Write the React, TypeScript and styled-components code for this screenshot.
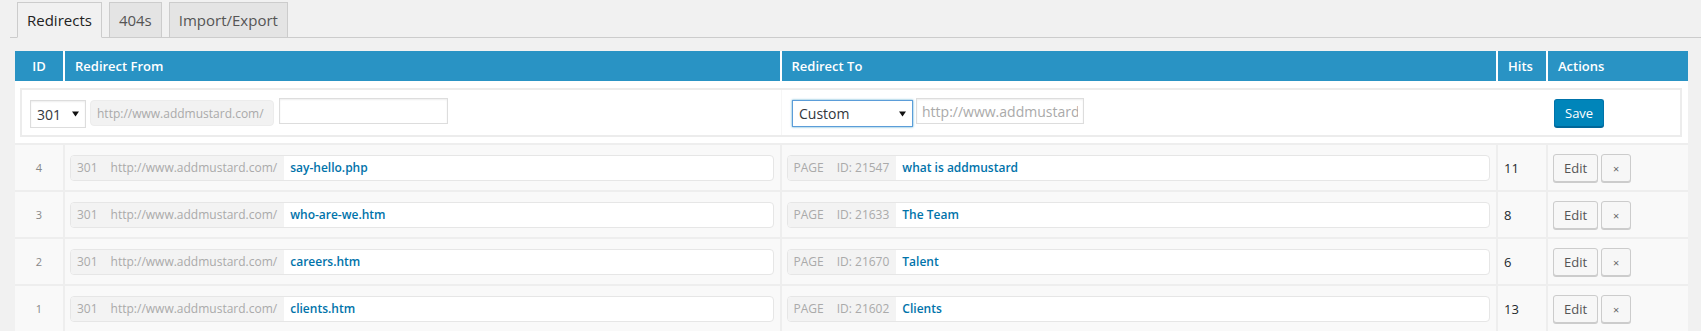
import React from "react";
import styled, { createGlobalStyle } from "styled-components";

const GlobalStyle = createGlobalStyle`
  html, body { margin: 0; padding: 0; background: #f1f1f1; }
  body { font-family: "Open Sans", "Noto Sans", sans-serif; font-size: 13px; color: #444; }
  * { box-sizing: border-box; }
  input { font-family: inherit; }
`;

const COLS = "48px minmax(0, 1fr) minmax(0, 1fr) 48px 140px";

const Page = styled.div`
  display: flex;
  flex-direction: column;
`;

const TabBar = styled.nav`
  display: flex;
  align-items: flex-end;
  gap: 7px;
  margin-left: 10px;
  padding: 2px 0 0 7px;
  border-bottom: 1px solid #ccc;
`;

const Tab = styled.a<{ $active?: boolean }>`
  display: block;
  font-size: 15px;
  font-weight: 400;
  line-height: 24px;
  padding: 5px 9px;
  border: 1px solid #ccc;
  border-bottom: ${(p) => (p.$active ? "1px solid #f1f1f1" : "none")};
  margin-bottom: ${(p) => (p.$active ? "-1px" : "0")};
  background: ${(p) => (p.$active ? "#f1f1f1" : "#e4e4e4")};
  color: ${(p) => (p.$active ? "#222" : "#555")};
  text-decoration: none;
  cursor: pointer;
`;

const Table = styled.div`
  margin: 13px 13px 0 15px;
  display: flex;
  flex-direction: column;
  background: #eeeeee;
`;

const HeaderRow = styled.div`
  display: grid;
  grid-template-columns: ${COLS};
  column-gap: 2px;
  background: #fff;
`;

const HeadCell = styled.div<{ $center?: boolean }>`
  background: #2993c4;
  color: #fff;
  font-weight: 600;
  font-size: 13px;
  line-height: 30px;
  padding: 0 10px;
  text-align: ${(p) => (p.$center ? "center" : "left")};
  white-space: nowrap;
`;

const AddRow = styled.div`
  background: #fff;
  padding: 7px 6px 6px 5px;
`;

const AddBox = styled.div`
  display: grid;
  grid-template-columns: minmax(0, 757fr) minmax(0, 715fr) 48px 132px;
  column-gap: 2px;
  height: 49px;
  border: 2px solid #ececec;
  background: #fff;
`;

const AddCell = styled.div<{ $pad: number }>`
  display: flex;
  align-items: flex-start;
  gap: 4px;
  padding: 8px 0 0 ${(p) => p.$pad}px;
  background: #fff;
  border-left: ${(p) => (p.$pad > 8 ? "1px solid #f6f6f6" : "none")};
`;

const SelectBox = styled.div<{ $w: number; $focus?: boolean }>`
  display: flex;
  align-items: center;
  justify-content: space-between;
  width: ${(p) => p.$w}px;
  height: ${(p) => (p.$focus ? 27 : 28)}px;
  margin-top: 2px;
  padding: 0 6px 0 6px;
  border: 1px solid ${(p) => (p.$focus ? "#5b9dd9" : "#ddd")};
  box-shadow: ${(p) =>
    p.$focus ? "0 0 2px rgba(30, 140, 190, 0.8)" : "inset 0 1px 2px rgba(0, 0, 0, 0.07)"};
  background: #fff;
  font-size: 14px;
  color: #32373c;
`;

const StaticPrefix = styled.div`
  display: flex;
  align-items: center;
  height: 26px;
  margin-top: 2px;
  padding: 0 9px 0 6px;
  border-radius: 4px;
  border: 1px solid #ececec;
  background: #f2f2f2;
  color: #aaa;
  font-size: 12px;
  white-space: nowrap;
`;

const TextInput = styled.input<{ $w: number; $gap?: number }>`
  width: ${(p) => p.$w}px;
  height: 26px;
  margin-left: ${(p) => p.$gap ?? 0}px;
  padding: 0 5px;
  border: 1px solid #ddd;
  box-shadow: inset 0 1px 2px rgba(0, 0, 0, 0.07);
  background: #fff;
  font-size: 14px;
  color: #32373c;
  outline: none;
  &::placeholder { color: #aaa; }
`;

const Button = styled.button<{ $primary?: boolean; $w?: number }>`
  height: 28px;
  padding: 0 ${(p) => (p.$w ? 0 : 10)}px 1px;
  width: ${(p) => (p.$w ? `${p.$w}px` : "auto")};
  border-radius: 3px;
  border: 1px solid ${(p) => (p.$primary ? "#0073aa" : "#ccc")};
  border-bottom-color: ${(p) => (p.$primary ? "#006799" : "#ccc")};
  box-shadow: 0 1px 0 ${(p) => (p.$primary ? "#006799" : "#ccc")};
  background: ${(p) => (p.$primary ? "#0085ba" : "#f7f7f7")};
  color: ${(p) => (p.$primary ? "#fff" : "#555")};
  font-family: "Open Sans", "Noto Sans", sans-serif;
  font-size: 13px;
  line-height: 26px;
  cursor: pointer;
  white-space: nowrap;
`;

const CloseGlyph = styled.span`
  font-size: 11px;
  color: #666;
`;

const DataRow = styled.div`
  display: grid;
  grid-template-columns: ${COLS};
  column-gap: 2px;
  margin-top: 2px;
`;

const Cell = styled.div`
  display: flex;
  align-items: center;
  height: 45px;
  background: #f9f9f9;
`;

const IdCell = styled(Cell)`
  justify-content: center;
  font-size: 11px;
  color: #888;
`;

const FieldCell = styled(Cell)`
  padding: 0 6px 0 5px;
`;

const HitsCell = styled(Cell)`
  padding-left: 6px;
  font-size: 13px;
  color: #23282d;
`;

const ActionsCell = styled(Cell)`
  padding-left: 5px;
  gap: 3px;
`;

const Field = styled.div`
  display: flex;
  flex: 1;
  height: 26px;
  border: 1px solid #e6e6e6;
  border-radius: 4px;
  overflow: hidden;
  background: #fff;
`;

const Prefix = styled.div`
  display: flex;
  align-items: center;
  gap: 13px;
  padding: 0 7px 0 6px;
  background: #f3f3f3;
  color: #aaa;
  font-size: 12px;
  white-space: nowrap;
`;

const Value = styled.div`
  display: flex;
  align-items: center;
  padding-left: 6px;
  color: #0073aa;
  font-weight: 600;
  font-size: 12px;
  white-space: nowrap;
`;

const Caret = () => (
  <svg width="7" height="6" viewBox="0 0 7 6" aria-hidden="true">
    <path d="M0 0.5h7L3.5 5.5z" fill="#111" />
  </svg>
);

const DOMAIN = "http://www.addmustard.com/";

const rows = [
  { id: 4, from: "say-hello.php", pageId: 21547, title: "what is addmustard", hits: 11 },
  { id: 3, from: "who-are-we.htm", pageId: 21633, title: "The Team", hits: 8 },
  { id: 2, from: "careers.htm", pageId: 21670, title: "Talent", hits: 6 },
  { id: 1, from: "clients.htm", pageId: 21602, title: "Clients", hits: 13 },
];

export default function App() {
  return (
    <Page>
      <GlobalStyle />
      <TabBar>
        <Tab $active>Redirects</Tab>
        <Tab>404s</Tab>
        <Tab>Import/Export</Tab>
      </TabBar>
      <Table>
        <HeaderRow>
          <HeadCell $center>ID</HeadCell>
          <HeadCell>Redirect From</HeadCell>
          <HeadCell>Redirect To</HeadCell>
          <HeadCell>Hits</HeadCell>
          <HeadCell>Actions</HeadCell>
        </HeaderRow>
        <AddRow>
          <AddBox>
            <AddCell $pad={8}>
              <SelectBox $w={56}>
                <span>301</span>
                <Caret />
              </SelectBox>
              <StaticPrefix>{DOMAIN}</StaticPrefix>
              <TextInput $w={169} $gap={1} />
            </AddCell>
            <AddCell $pad={10}>
              <SelectBox $w={121} $focus>
                <span>Custom</span>
                <Caret />
              </SelectBox>
              <TextInput $w={168} placeholder={DOMAIN} style={{ marginLeft: -1 }} />
            </AddCell>
            <AddCell $pad={0} />
            <AddCell $pad={6}>
              <Button $primary style={{ marginTop: 1 }}>Save</Button>
            </AddCell>
          </AddBox>
        </AddRow>
        {rows.map((r) => (
          <DataRow key={r.id}>
            <IdCell>{r.id}</IdCell>
            <FieldCell>
              <Field>
                <Prefix>
                  <span>301</span>
                  <span>{DOMAIN}</span>
                </Prefix>
                <Value>{r.from}</Value>
              </Field>
            </FieldCell>
            <FieldCell>
              <Field>
                <Prefix>
                  <span>PAGE</span>
                  <span>ID: {r.pageId}</span>
                </Prefix>
                <Value>{r.title}</Value>
              </Field>
            </FieldCell>
            <HitsCell>{r.hits}</HitsCell>
            <ActionsCell>
              <Button>Edit</Button>
              <Button $w={30}>
                <CloseGlyph>×</CloseGlyph>
              </Button>
            </ActionsCell>
          </DataRow>
        ))}
      </Table>
    </Page>
  );
}
